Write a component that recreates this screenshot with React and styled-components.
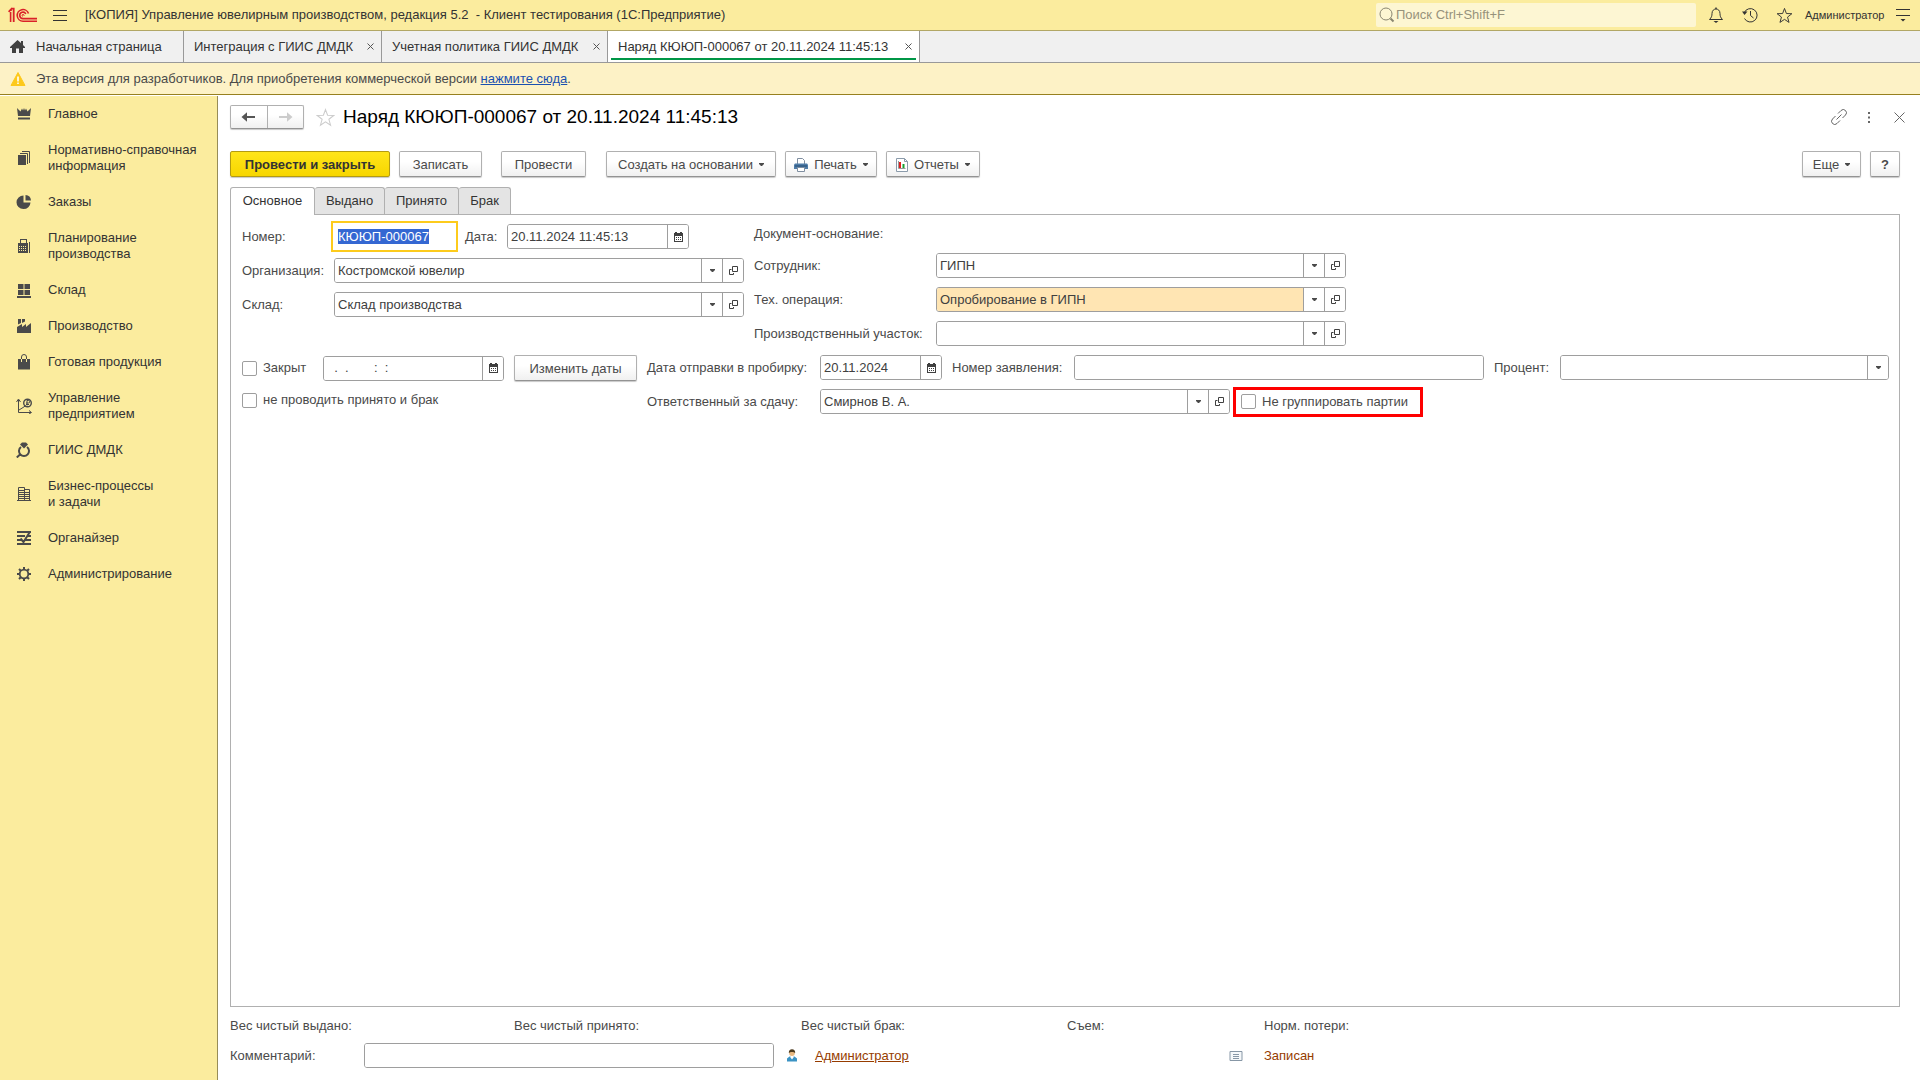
import React, { useEffect, useRef } from "react";
import styled, { createGlobalStyle, css } from "styled-components";

const GlobalStyle = createGlobalStyle`
  *, *::before, *::after { box-sizing: border-box; }
  body {
    margin: 0;
    background: #fff;
    color: #4a4a4a;
    font-family: "Liberation Sans", Arial, sans-serif;
    font-size: 13px;
    line-height: 16px;
  }
  button, input { font: inherit; color: inherit; }
  svg { display: block; flex: none; }
`;

const Page = styled.div`
  display: flex;
  flex-direction: column;
  min-height: 100vh;
`;

const TopBar = styled.header`
  display: flex;
  align-items: center;
  height: 31px;
  padding: 0 3px 0 8px;
  background: #fbec9e;
  border-bottom: 1px solid #b2a765;
  color: #333;
`;

const IconButton = styled.button`
  display: grid;
  place-items: center;
  width: ${(p) => p.$w || 34}px;
  height: 24px;
  padding: 0;
  border: 0;
  background: none;
  color: ${(p) => p.$color || "#333"};
`;

const AppTitle = styled.div`
  margin-left: 10px;
  flex: 1;
  white-space: pre;
`;

const Search = styled.label`
  display: flex;
  align-items: center;
  width: 320px;
  height: 24px;
  margin-right: 3px;
  padding-left: 3px;
  border-radius: 2px;
  background: #fdf6d3;
  color: #8a8671;
`;

const SearchInput = styled.input`
  flex: 1;
  min-width: 0;
  margin-left: 1px;
  padding: 0;
  border: 0;
  background: none;
  outline: 0;
  &::placeholder { color: #97927b; opacity: 1; }
`;

const UserName = styled.button`
  width: 88px;
  padding: 0 0 0 4px;
  border: 0;
  background: none;
  font-size: 11px;
  text-align: left;
  color: #333;
`;

const WindowTabs = styled.nav`
  display: flex;
  height: 32px;
  background: #f0f0f0;
  border-bottom: 1px solid #999;
`;

const WindowTab = styled.div`
  position: relative;
  display: flex;
  align-items: center;
  justify-content: space-between;
  width: ${(p) => p.$w}px;
  padding: 0 5px 0 10px;
  border-right: 1px solid #999;
  background: ${(p) => (p.$active ? "#fff" : "none")};
  color: #333;
  white-space: nowrap;
  ${(p) =>
    p.$active &&
    css`
      &::after {
        content: "";
        position: absolute;
        left: 3px;
        right: 3px;
        bottom: 2px;
        height: 2px;
        background: #009646;
      }
    `}
`;

const TabLink = styled.a`
  display: flex;
  align-items: center;
  gap: 11px;
  color: inherit;
  text-decoration: none;
`;

const Notice = styled.div`
  display: flex;
  align-items: center;
  gap: 10px;
  height: 32px;
  padding-left: 10px;
  background: #fdf2c6;
  border-bottom: 1px solid #97801f;
  a { color: #1a50b0; }
`;

const Body = styled.div`
  display: flex;
  flex: 1;
`;

const Sidebar = styled.nav`
  width: 218px;
  flex: none;
  margin-top: 1px;
  background: #fbec9e;
  border-right: 1px solid #978c57;
`;

const SideLink = styled.a`
  display: flex;
  align-items: center;
  gap: 16px;
  padding: 10px 0 10px 16px;
  color: #333;
  text-decoration: none;
  white-space: pre-line;
  svg { color: #4a4a4a; }
`;

const Main = styled.main`
  display: flex;
  flex-direction: column;
  flex: 1;
  min-width: 0;
  padding: 10px 20px 12px 12px;
`;

const Heading = styled.div`
  display: flex;
  align-items: center;
  height: 24px;
  margin: 0 -14px 22px 0;
`;

const Title = styled.h1`
  flex: 1;
  margin: 0;
  font-size: 19px;
  font-weight: 400;
  line-height: 24px;
  color: #000;
`;

const buttonFace = css`
  border: 1px solid #b0b0b0;
  border-bottom-color: #939393;
  border-radius: 2px;
  background: linear-gradient(#fff 40%, #f0f0f0);
  box-shadow: 0 1px 1px rgba(0, 0, 0, 0.22);
`;

const NavButtons = styled.div`
  ${buttonFace}
  display: flex;
  width: 74px;
  height: 24px;
`;

const NavButton = styled.button`
  display: grid;
  place-items: center;
  flex: 1;
  padding: 0;
  border: 0;
  background: none;
  color: #555;
  & + & { border-left: 1px solid #b0b0b0; }
  &:disabled { color: #ccc; }
`;

const Toolbar = styled.div`
  display: flex;
  gap: 9px;
  margin-bottom: 10px;
`;

const Spacer = styled.div`
  flex: ${(p) => (p.$w ? "none" : 1)};
  width: ${(p) => p.$w || 0}px;
`;

const Button = styled.button`
  ${buttonFace}
  display: flex;
  align-items: center;
  justify-content: center;
  gap: 6px;
  width: ${(p) => p.$w}px;
  height: 26px;
  padding: 1px 0 0;
  white-space: nowrap;
  color: #4a4a4a;
  ${(p) =>
    p.$primary &&
    css`
      border-color: #b39b12;
      background: linear-gradient(#ffe51a, #f7d600);
      color: #333;
      font-weight: 700;
    `}
`;

const FormTabs = styled.div`
  display: flex;
  height: 27px;
`;

const FormTab = styled.button`
  width: ${(p) => p.$w}px;
  height: ${(p) => (p.$active ? 28 : 27)}px;
  z-index: ${(p) => (p.$active ? 1 : 0)};
  padding: 0 0 1px;
  border: 1px solid #b0b0b0;
  border-bottom: 0;
  border-left-width: ${(p) => (p.$active ? 1 : 0)}px;
  border-radius: 3px 3px 0 0;
  background: ${(p) => (p.$active ? "#fff" : "#e4e4e4")};
  color: #333;
`;

const Panel = styled.section`
  flex: 1;
  padding: 9px 10px 0 11px;
  border: 1px solid #b0b0b0;
`;

const Columns = styled.div`
  display: flex;
  align-items: flex-start;
  gap: 10px;
  margin-bottom: 9px;
`;

const Stack = styled.div`
  display: flex;
  flex-direction: column;
  gap: 9px;
  flex: ${(p) => (p.$grow ? 1 : "none")};
  min-width: 0;
`;

const Line = styled.div`
  display: flex;
  align-items: center;
  height: ${(p) => p.$h || 25}px;
  gap: ${(p) => p.$gap || 0}px;
`;

const Label = styled.label`
  flex: none;
  width: ${(p) => (p.$w ? `${p.$w}px` : "auto")};
  white-space: nowrap;
`;

const FieldBox = styled.div`
  display: flex;
  flex: ${(p) => (p.$w ? "none" : 1)};
  width: ${(p) => (p.$w ? `${p.$w}px` : "auto")};
  min-width: 0;
  height: 25px;
  border: 1px solid #9e9e9e;
  border-radius: 3px;
  background: #fff;
  overflow: hidden;
`;

const FieldInput = styled.input`
  flex: 1;
  width: 0;
  min-width: 0;
  padding: 0 3px;
  border: 0;
  outline: 0;
  background: ${(p) => (p.$accent ? "#ffe5b3" : "#fff")};
  color: #404040;
`;

const FieldButton = styled.button`
  display: grid;
  place-items: center;
  width: ${(p) => p.$w || 21}px;
  padding: 0;
  border: 0;
  border-left: 1px solid #9e9e9e;
  background: #fff;
  color: #404040;
`;

const NumberInput = styled.input`
  width: 121px;
  height: 25px;
  margin-right: 10px;
  padding: 0 3px;
  border: 1px solid #fff;
  outline: 2px solid #fdcb1c;
  outline-offset: 1px;
  &::selection { background: #3467d2; color: #fff; }
`;

const Check = styled.label`
  display: flex;
  align-items: center;
  gap: 6px;
  width: ${(p) => (p.$w ? `${p.$w}px` : "auto")};
  white-space: nowrap;
`;

const CheckInput = styled.input.attrs({ type: "checkbox" })`
  appearance: none;
  flex: none;
  width: 15px;
  height: 15px;
  margin: 0;
  border: 1px solid #9e9e9e;
  border-radius: 2px;
  background: #fff;
`;

const Highlight = styled.div`
  display: flex;
  align-items: center;
  width: 190px;
  height: 30px;
  margin-left: 3px;
  padding-left: 5px;
  border: 3px solid #fe0000;
`;

const Footer = styled.footer`
  display: flex;
  flex-direction: column;
  gap: 7px;
  padding-top: 9px;
`;

const Totals = styled.div`
  display: grid;
  grid-template-columns: 284px 287px 266px 197px auto;
  line-height: 20px;
`;

const AuthorLink = styled.a`
  width: 414px;
  margin-left: 17px;
  color: #963c00;
`;

const Status = styled.span`
  margin-left: 20px;
  color: #963c00;
`;

const Svg = ({ w = 16, h = 16, children }) => (
  <svg width={w} height={h} viewBox={`0 0 ${w} ${h}`} fill="none" stroke="currentColor" aria-hidden="true">
    {children}
  </svg>
);

const Logo = () => (
  <svg width="30" height="16" viewBox="0 0 30 16" fill="none" stroke="#da2128" strokeWidth="1.6" aria-label="1C">
    <path d="M0.5 4.8 3 2.2V4M2.6 5v10M0.8 4.8l3-3.2h2V15M5.6 2v13" />
    <path d="M20.5 6.5A5.8 5.8 0 1 0 15 14.2h14" />
    <path d="M17.8 7A3.2 3.2 0 1 0 15 11.6h14" />
    <path d="M16 8.8a1 1 0 1 0-1.2.6" strokeWidth="1" />
  </svg>
);

const Caret = () => (
  <svg width="5" height="3" viewBox="0 0 5 3" aria-hidden="true">
    <path d="M0 0h5v1L3 3H2L0 1z" fill="#4a4a4a" />
  </svg>
);

const Close = () => (
  <Svg w={9} h={9}>
    <path d="m1.5 1.5 6 6m0-6-6 6" />
  </Svg>
);

const OpenIcon = () => (
  <Svg w={9} h={9}>
    <path d="M3.500.5h5v5h-5zM2.500 3.500h-2v5h4V7" />
  </Svg>
);

const CalendarIcon = () => (
  <svg width="9" height="10" viewBox="0 0 9 10" shapeRendering="crispEdges" aria-hidden="true">
    <path fill="#404040" fillRule="evenodd" d="M1 0h2v1h3V0h2v1h1v9H0V1h1zM1 4v5h7V4z" />
    <path stroke="#404040" strokeDasharray="1 1" d="M2 5.500h5M2 7.500h5" />
  </svg>
);

const Arrow = ({ flip }) => (
  <svg width="15" height="12" viewBox="0 0 15 12" aria-hidden="true">
    <path fill="currentColor" d={flip ? "M14.500 6 9 1.200V5H1v2h8v3.800z" : "M.5 6 6 1.200V5h8v2H6v3.800z"} />
  </svg>
);

const StarIcon = ({ size = 18 }) => (
  <svg width={size} height={size} viewBox="0 0 18 18" fill="none" stroke="currentColor" aria-hidden="true">
    <path d="m9 1.500 2 5.400 5.800.2-4.600 3.600 1.600 5.600L9 13.100l-4.800 3.200 1.600-5.600L1.200 7.100 7 6.900z" />
  </svg>
);

const PrintIcon = () => (
  <svg width="14" height="14" viewBox="0 0 14 14" aria-hidden="true">
    <path d="M3.500 6V.5h5l2 2V6" fill="#fff" stroke="#7f8ea0" />
    <path d="M0 6.500 1 5.500h12l1 1V11H0z" fill="#4f7ca8" />
    <path d="M1 8h12" stroke="#234a70" />
    <path d="M3.500 9.500h7v4h-7z" fill="#fff" stroke="#7f8ea0" />
  </svg>
);

const ReportIcon = () => (
  <svg width="12" height="14" viewBox="0 0 12 14" aria-hidden="true">
    <path d="M.5.5h8l3 3v10H.5z" fill="#fff" stroke="#8b9bab" />
    <path d="M8.500.5v3h3" fill="none" stroke="#8b9bab" />
    <path d="M4 4v6" stroke="#e02020" strokeWidth="2" />
    <path d="M7.500 6v4" stroke="#18a030" strokeWidth="2" />
    <path d="M2.500 3v7.500h7" fill="none" stroke="#999" />
  </svg>
);

const solid = { fill: "currentColor", stroke: "none" };
const icons = {
  crown: (
    <path {...solid} d="M1 2l3.500 3.500L6 2.500l1 2L8 2l1 2.500 1-2 1.500 3L15 2l-1 8H2zM2 11.500h12v2H2z" />
  ),
  docs: (
    <>
      <path {...solid} d="M2 5h8v10H2z" />
      <path d="M4 3.500h7.500V14M6 1.500h7.500V13" />
    </>
  ),
  pie: (
    <>
      <path {...solid} d="M7.500 1.500V8.500H14.500A7 6.800 0 1 1 7.500 1.500z" />
      <path {...solid} d="M9.500 1a6 6 0 0 1 5.500 5.500H9.500z" />
    </>
  ),
  calc: (
    <>
      <path {...solid} fillRule="evenodd" d="M4 1h7v4h1v10H2V5h2zM5 2v3h5V2z" />
      <path
        stroke="#fbec9e"
        strokeDasharray="1 1"
        shapeRendering="crispEdges"
        d="M3 8.500h8M3 10.500h8M3 12.500h8"
      />
      <path d="M13.500 4v11" />
    </>
  ),
  boxes: <path {...solid} d="M2 2h5.500v5H2zM8.500 2H14v5H8.500zM2 8h5.500v5H2zM8.500 8H14v5H8.500zM1 14h14v2H1z" />,
  factory: <path {...solid} d="M2 1h3v4L2 6.500zM6 1h3v2.500L6 5zM1 15V9l5-3v3l4-3v3l5-4v10z" />,
  bag: (
    <>
      <path {...solid} d="M2 5h12v10.500H2z" />
      <path d="M5.500 8V3.500a2.500 2.500 0 0 1 5 0V8" stroke="#fbec9e" />
      <path d="M5.500 5V3a2.500 2.500 0 0 1 5 0v2" />
    </>
  ),
  chart: (
    <>
      <path d="M2.500 2v12.500H15M.5 4l2-3 2 3M13 12.500l2.500 2-2.500 1.500M3 12l4-2.500 3-2" />
      <circle cx="11.500" cy="5" r="3.800" strokeWidth="1.400" />
      <path d="M11 7.500v-5h1.500a1.200 1.200 0 0 1 0 2.500H10M10 6.500h3" />
    </>
  ),
  ring: (
    <>
      <path d="M5 5a5 5 0 1 0 6 0M4 12.500.8 15.500" strokeWidth="2" />
      <path {...solid} d="M6 .5h4l2 2-4 4-4-4z" />
    </>
  ),
  building: (
    <path d="M2.500 15V1.500h6V15M8.500 3.500h5V15M1 14.500h14M3 4.500h5M3 6.500h5M3 8.500h5M3 10.500h5M3 12.500h5M9 6.500h4M9 8.500h4M9 10.500h4M9 12.500h4" />
  ),
  organizer: (
    <path d="M1 2h14M1 6h8M12 6h3M1 10h4M9 10h6M1 14h14M4.500 8.500 7.500 12 13.500 2.500" strokeWidth="2" />
  ),
  gear: (
    <>
      <circle cx="8" cy="8" r="4.300" strokeWidth="1.800" />
      <path
        strokeWidth="2"
        d="M8 1v2.500M8 12.500V15M1 8h2.500M12.500 8H15M3 3l1.800 1.800M11.200 11.200 13 13M13 3l-1.800 1.800M4.800 11.200 3 13"
      />
    </>
  ),
};

const sections = [
  ["crown", "Главное"],
  ["docs", "Нормативно-справочная\nинформация"],
  ["pie", "Заказы"],
  ["calc", "Планирование\nпроизводства"],
  ["boxes", "Склад"],
  ["factory", "Производство"],
  ["bag", "Готовая продукция"],
  ["chart", "Управление\nпредприятием"],
  ["ring", "ГИИС ДМДК"],
  ["building", "Бизнес-процессы\nи задачи"],
  ["organizer", "Органайзер"],
  ["gear", "Администрирование"],
];

const windows = [
  ["Интеграция с ГИИС ДМДК", 198],
  ["Учетная политика ГИИС ДМДК", 226],
  ["Наряд КЮЮП-000067 от 20.11.2024 11:45:13", 312, true],
];

function Field({ id, value = "", w, accent, date, pick, open, buttonWidth }) {
  return (
    <FieldBox $w={w}>
      <FieldInput id={id} defaultValue={value} $accent={accent} />
      {date && (
        <FieldButton aria-label="Календарь">
          <CalendarIcon />
        </FieldButton>
      )}
      {pick && (
        <FieldButton $w={buttonWidth} aria-label="Выбрать">
          <Caret />
        </FieldButton>
      )}
      {open && (
        <FieldButton aria-label="Открыть">
          <OpenIcon />
        </FieldButton>
      )}
    </FieldBox>
  );
}

function LabeledLine({ id, label, labelWidth, ...field }) {
  return (
    <Line>
      <Label htmlFor={id} $w={labelWidth}>{label}</Label>
      <Field id={id} w={410} pick open {...field} />
    </Line>
  );
}

export default function App() {
  const numberRef = useRef(null);
  useEffect(() => {
    numberRef.current.focus();
    numberRef.current.select();
  }, []);

  return (
    <Page>
      <GlobalStyle />
      <TopBar>
        <Logo />
        <Spacer $w={7} />
        <IconButton $w={30} aria-label="Меню">
          <Svg w={14} h={13}>
            <path d="M0 1.500h14M0 6.500h14M0 11.500h14" />
          </Svg>
        </IconButton>
        <AppTitle>{"[КОПИЯ] Управление ювелирным производством, редакция 5.2  - Клиент тестирования (1С:Предприятие)"}</AppTitle>
        <Search>
          <Svg>
            <circle cx="7" cy="7" r="6" />
            <path d="m11.500 11.500 3 3" strokeWidth="2" />
          </Svg>
          <SearchInput aria-label="Поиск" placeholder="Поиск Ctrl+Shift+F" />
        </Search>
        <IconButton aria-label="Уведомления">
          <Svg>
            <path d="M1.500 12.500h13C12.500 10.500 12 9 12 6.500 12 3.500 10 2 8 2S4 3.500 4 6.500c0 2.500-.5 4-2.500 6z" />
            <path {...solid} d="M5.500 14h5L8 16zM7.300.5h1.400V2H7.300z" />
          </Svg>
        </IconButton>
        <IconButton aria-label="История">
          <Svg>
            <path d="M2.300 5.500A6.700 6.700 0 1 1 2.500 11.500M8.500 4v4.500l3 2.500" />
            <path {...solid} d="M0 4.500h5.500L2.500 8z" />
          </Svg>
        </IconButton>
        <IconButton aria-label="Избранное">
          <StarIcon size={17} />
        </IconButton>
        <UserName>Администратор</UserName>
        <IconButton $w={28} aria-label="Сервис">
          <Svg w={14} h={14}>
            <path d="M0 1.500h14M0 7.500h14" />
            <path {...solid} d="M4.500 11h5L7 13.500z" />
          </Svg>
        </IconButton>
      </TopBar>

      <WindowTabs>
        <WindowTab $w={184}>
          <TabLink href="#home">
            <svg width="15" height="13" viewBox="0 0 15 13" fill="#404040" aria-hidden="true">
              <path d="M7.500 0 11 3V1h2v4l2 2v1h-2v5H9V8.500H6V13H2V8H0V7z" />
            </svg>
            Начальная страница
          </TabLink>
        </WindowTab>
        {windows.map(([name, w, active]) => (
          <WindowTab key={name} $w={w} $active={active}>
            <TabLink href="#window">{name}</TabLink>
            <IconButton $w={11} $color="#555" aria-label="Закрыть вкладку">
              <Close />
            </IconButton>
          </WindowTab>
        ))}
      </WindowTabs>

      <Notice>
        <svg width="16" height="14" viewBox="0 0 16 14" aria-hidden="true">
          <path d="M8 .5 15 13.500H1z" fill="#fdc91c" stroke="#fdc91c" strokeLinejoin="round" />
          <path d="M8 4.500v5M8 10.500v1.500" stroke="#fff" strokeWidth="1.600" />
        </svg>
        <span>
          Эта версия для разработчиков. Для приобретения коммерческой версии <a href="#buy">нажмите сюда</a>.
        </span>
      </Notice>

      <Body>
        <Sidebar>
          {sections.map(([icon, name]) => (
            <SideLink key={name} href={`#${icon}`}>
              <Svg>{icons[icon]}</Svg>
              {name}
            </SideLink>
          ))}
        </Sidebar>

        <Main>
          <Heading>
            <NavButtons>
              <NavButton aria-label="Назад"><Arrow /></NavButton>
              <NavButton aria-label="Вперед" disabled><Arrow flip /></NavButton>
            </NavButtons>
            <Spacer $w={4} />
            <IconButton $w={35} $color="#ccc" aria-label="В избранное">
              <StarIcon size={19} />
            </IconButton>
            <Title>Наряд КЮЮП-000067 от 20.11.2024 11:45:13</Title>
            <IconButton $w={30} $color="#666" aria-label="Ссылка">
              <Svg>
                <path d="m7 4.500 3-3a3 3 0 0 1 4.500 4.500l-3 3M9 11.500l-3 3A3 3 0 0 1 1.500 10l3-3M5.500 10.500l5-5" />
              </Svg>
            </IconButton>
            <IconButton $w={30} $color="#666" aria-label="Ещё">
              <Svg w={2} h={11}>
                <path d="M1 0v2M1 4.500v2M1 9v2" strokeWidth="2" />
              </Svg>
            </IconButton>
            <IconButton $w={30} $color="#666" aria-label="Закрыть">
              <Svg w={11} h={11}>
                <path d="m.5.5 10 10m0-10-10 10" />
              </Svg>
            </IconButton>
          </Heading>

          <Toolbar>
            <Button $primary $w={160}>Провести и закрыть</Button>
            <Button $w={83}>Записать</Button>
            <Spacer $w={1} />
            <Button $w={85}>Провести</Button>
            <Spacer $w={2} />
            <Button $w={170}>Создать на основании <Caret /></Button>
            <Button $w={92}><PrintIcon /> Печать <Caret /></Button>
            <Button $w={94}><ReportIcon /> Отчеты <Caret /></Button>
            <Spacer />
            <Button $w={59}>Еще <Caret /></Button>
            <Button $w={30} aria-label="Справка"><b>?</b></Button>
          </Toolbar>

          <FormTabs>
            <FormTab $w={85} $active>Основное</FormTab>
            <FormTab $w={70}>Выдано</FormTab>
            <FormTab $w={74}>Принято</FormTab>
            <FormTab $w={52}>Брак</FormTab>
          </FormTabs>

          <Panel>
            <Columns>
              <Stack>
                <Line>
                  <Label htmlFor="number" $w={92}>Номер:</Label>
                  <NumberInput id="number" ref={numberRef} defaultValue="КЮЮП-000067" />
                  <Label htmlFor="date" $w={42}>Дата:</Label>
                  <Field id="date" value="20.11.2024 11:45:13" w={182} date />
                </Line>
                <LabeledLine id="org" label="Организация:" labelWidth={92} value="Костромской ювелир" />
                <LabeledLine id="store" label="Склад:" labelWidth={92} value="Склад производства" />
              </Stack>
              <Stack>
                <Line $h={20}>Документ-основание:</Line>
                <LabeledLine id="employee" label="Сотрудник:" labelWidth={182} value="ГИПН" />
                <LabeledLine id="operation" label="Тех. операция:" labelWidth={182} value="Опробирование в ГИПН" accent />
                <LabeledLine id="area" label="Производственный участок:" labelWidth={182} />
              </Stack>
            </Columns>

            <Columns>
              <Stack>
                <Line $h={26}>
                  <Check $w={81}><CheckInput />Закрыт</Check>
                  <Field id="closed-at" value="  .  .       :  :" w={181} date />
                  <Spacer $w={10} />
                  <Button $w={123}>Изменить даты</Button>
                </Line>
                <Line $h={20}>
                  <Check><CheckInput />не проводить принято и брак</Check>
                </Line>
              </Stack>
              <Stack $grow>
                <Line>
                  <Label htmlFor="sent" $w={173}>Дата отправки в пробирку:</Label>
                  <Field id="sent" value="20.11.2024" w={122} date />
                  <Spacer $w={10} />
                  <Label htmlFor="request" $w={122}>Номер заявления:</Label>
                  <Field id="request" w={410} />
                  <Spacer $w={10} />
                  <Label htmlFor="percent" $w={66}>Процент:</Label>
                  <Field id="percent" pick />
                </Line>
                <Line>
                  <Label htmlFor="person" $w={173}>Ответственный за сдачу:</Label>
                  <Field id="person" value="Смирнов В. А." w={410} pick open />
                  <Highlight>
                    <Check><CheckInput />Не группировать партии</Check>
                  </Highlight>
                </Line>
              </Stack>
            </Columns>
          </Panel>

          <Footer>
            <Totals>
              <span>Вес чистый выдано:</span>
              <span>Вес чистый принято:</span>
              <span>Вес чистый брак:</span>
              <span>Съем:</span>
              <span>Норм. потери:</span>
            </Totals>
            <Line>
              <Label htmlFor="comment" $w={134}>Комментарий:</Label>
              <Field id="comment" w={410} />
              <Spacer $w={12} />
              <svg width="12" height="14" viewBox="0 0 12 14" aria-hidden="true">
                <path d="M1 12.500V9.500l2.500-2h5L11 9.500v3z" fill="#3b93c4" />
                <path d="M4.500 6.500h3v2L6 10.500 4.500 8.500z" fill="#fff" />
                <circle cx="6" cy="4" r="2.900" fill="#e8b880" />
                <path d="M2.800 4a3.200 3.700 0 0 1 6.400 0C8 2.500 4 2.500 2.800 4z" fill="#4d3b1f" />
              </svg>
              <AuthorLink href="#author">Администратор</AuthorLink>
              <svg width="15" height="12" viewBox="0 0 15 12" fill="#f5f8fa" stroke="#8797a6" aria-hidden="true">
                <path d="M1 1.500h12v9H1zM4 4.500h6M4 6.500h6M4 8.500h6" />
              </svg>
              <Status>Записан</Status>
            </Line>
          </Footer>
        </Main>
      </Body>
    </Page>
  );
}
